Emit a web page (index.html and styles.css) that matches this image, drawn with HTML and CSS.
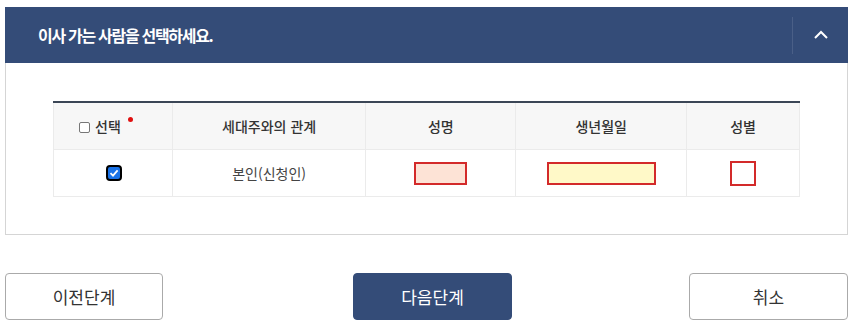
FILE: index.html
```html
<!DOCTYPE html>
<html lang="ko">
<head>
  <meta charset="UTF-8">
  <title>이사 가는 사람 선택</title>
  <link rel="stylesheet" href="styles.css">
</head>
<body>
  <section class="panel">
    <div class="panel-head">
      <h2 class="panel-title">이사 가는 사람을 선택하세요.</h2>
      <button type="button" class="toggle" aria-label="접기">
        <svg width="16" height="10" viewBox="0 0 16 10"><path d="M2 8 L8 2 L14 8" fill="none" stroke="#fff" stroke-width="2"/></svg>
      </button>
    </div>

    <div class="panel-body">
      <table class="person-table">
        <colgroup>
          <col class="c-select">
          <col class="c-rel">
          <col class="c-name">
          <col class="c-birth">
          <col class="c-sex">
        </colgroup>
        <thead>
          <tr>
            <th><span class="box"></span>선택<span class="req"></span></th>
            <th>세대주와의 관계</th>
            <th>성명</th>
            <th>생년월일</th>
            <th>성별</th>
          </tr>
        </thead>
        <tbody>
          <tr>
            <td>
              <svg class="checked" width="16" height="16" viewBox="0 0 16 16">
                <rect x="1" y="1" width="14" height="14" rx="3" fill="#1a73e8" stroke="#000" stroke-width="2"/>
                <path d="M4.5 8.2 L7 10.6 L11.6 5.4" fill="none" stroke="#fff" stroke-width="1.8"/>
              </svg>
            </td>
            <td>본인(신청인)</td>
            <td><span class="field field-name"></span></td>
            <td><span class="field field-birth"></span></td>
            <td><span class="field field-sex"></span></td>
          </tr>
        </tbody>
      </table>
    </div>
  </section>

  <div class="actions">
    <button type="button" class="btn btn-prev">이전단계</button>
    <button type="button" class="btn btn-next">다음단계</button>
    <button type="button" class="btn btn-cancel">취소</button>
  </div>
</body>
</html>
```

FILE: styles.css
```css
body {
  margin: 0;
  font-family: "Noto Sans CJK KR", "Noto Sans", sans-serif;
  color: #333;
  background: #fff;
}
.panel {
  margin: 7px 6px 0 5px;
}
.panel-head {
  display: flex;
  align-items: center;
  height: 56px;
  background-color: #344c78;
}
.panel-title {
  flex-grow: 1;
  margin: 0;
  padding-left: 33px;
  font-size: 16px;
  font-weight: bold;
  letter-spacing: -1.3px;
  color: #fff;
}
.toggle {
  display: flex;
  align-items: center;
  justify-content: center;
  width: 56px;
  height: 37px;
  padding: 0;
  border: none;
  border-left: 1px solid #4a5f87;
  background: none;
  cursor: pointer;
}
.panel-body {
  padding: 38px 46px 37px 47px;
  border: 1px solid #d5d5d5;
  border-top: none;
}
.person-table {
  width: 747px;
  border-collapse: collapse;
  border-top: 2px solid #3b4656;
  font-size: 14px;
}
.c-select { width: 119px; }
.c-rel { width: 194px; }
.c-name { width: 150px; }
.c-birth { width: 171px; }
.c-sex { width: 113px; }
.person-table th,
.person-table td {
  padding: 0;
  border: 1px solid #ebebeb;
  text-align: center;
  vertical-align: middle;
}
.person-table th {
  height: 46px;
  border-top: none;
  background-color: #f7f7f7;
  font-weight: 500;
  color: #333;
}
.person-table td {
  height: 46px;
  color: #444;
}
.box {
  display: inline-block;
  width: 9px;
  height: 9px;
  margin-right: 5px;
  border: 1px solid #777;
  border-radius: 2px;
  background: #fff;
  vertical-align: -1px;
}
.req {
  display: inline-block;
  width: 5px;
  height: 5px;
  margin: 0 14px 0 7px;
  border-radius: 50%;
  background-color: #e01010;
  vertical-align: 10px;
}
.checked {
  display: block;
  margin: 0 auto;
  position: relative;
  left: 1px;
}
.field {
  display: inline-block;
  box-sizing: border-box;
  height: 23px;
  border: 2px solid #d32a2a;
  vertical-align: middle;
}
.field-name {
  width: 53px;
  background-color: #fde3d6;
}
.field-birth {
  width: 109px;
  background-color: #fff9c8;
}
.field-sex {
  width: 26px;
  height: 25px;
  background-color: #fff;
}
.actions {
  display: flex;
  margin: 38px 6px 0 5px;
}
.btn {
  width: 159px;
  height: 47px;
  border: 1px solid #aaa;
  border-radius: 4px;
  background: #fff;
  font-family: "Noto Sans CJK KR", "Noto Sans", sans-serif;
  font-size: 17px;
  color: #333;
  cursor: pointer;
}
.btn-prev {
  width: 158px;
  margin-right: 190px;
}
.btn-next {
  border-color: #344c78;
  background-color: #344c78;
  color: #fff;
}
.btn-cancel {
  margin-left: auto;
}
```
